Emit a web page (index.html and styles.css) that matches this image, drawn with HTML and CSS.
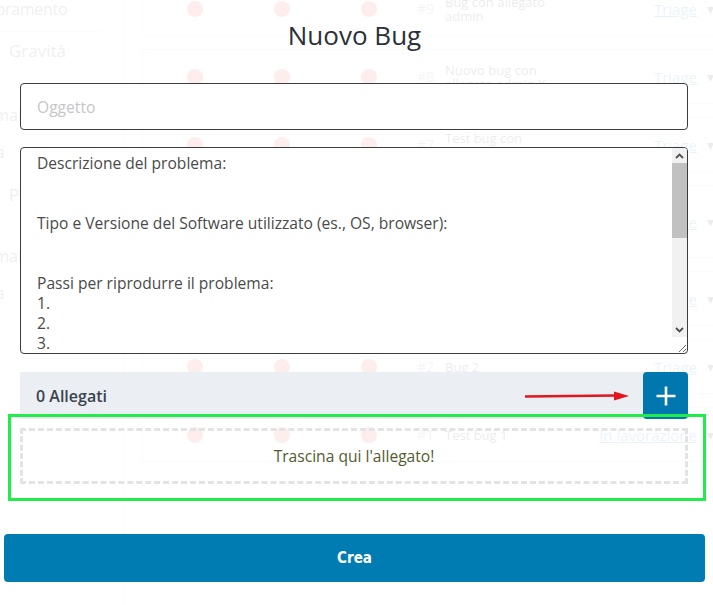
FILE: index.html
```html
<!DOCTYPE html>
<html lang="it">
<head>
<meta charset="utf-8">
<title>Nuovo Bug</title>
<link rel="stylesheet" href="styles.css">
</head>
<body>
<div class="app">
  <aside class="filters">
    <div class="f-opt f-first">Miglioramento</div>
    <div class="f-sep"></div>
    <div class="f-head">Gravità</div>
    <div class="f-opt f-gap">Normal</div>
    <div class="f-opt f-short">Alta</div>
    <div class="f-head f-head2">Priorità</div>
    <div class="f-opt f-gap2">Normal</div>
    <div class="f-opt f-short">Alta</div>
  </aside>
  <section class="list">
    <div class="card">
      <span class="dot"></span><span class="dot"></span><span class="dot"></span>
      <span class="id">#9</span><span class="title">Bug con allegato<br>admin</span>
      <span class="status">Triage</span><span class="chev">&#9662;</span>
    </div>
    <div class="card">
      <span class="dot"></span><span class="dot"></span><span class="dot"></span>
      <span class="id">#8</span><span class="title">Nuovo bug con<br>allegato admin X</span>
      <span class="status">Triage</span><span class="chev">&#9662;</span>
    </div>
    <div class="card">
      <span class="dot"></span><span class="dot"></span><span class="dot"></span>
      <span class="id">#7</span><span class="title">Test bug con<br>allegato</span>
      <span class="status">Triage</span><span class="chev">&#9662;</span>
    </div>
    <div class="card card-tall">
      <span class="dot"></span><span class="dot"></span><span class="dot"></span>
      <span class="id">#5</span><span class="title">Bug con<br>descrizione<br>lunga</span>
      <span class="status">Triage</span><span class="chev">&#9662;</span>
    </div>
    <div class="card">
      <span class="dot"></span><span class="dot"></span><span class="dot"></span>
      <span class="id">#3</span><span class="title">Bug 3</span>
      <span class="status">Triage</span><span class="chev">&#9662;</span>
    </div>
    <div class="card">
      <span class="dot"></span><span class="dot"></span><span class="dot"></span>
      <span class="id">#2</span><span class="title">Bug 2</span>
      <span class="status">Triage</span><span class="chev">&#9662;</span>
    </div>
    <div class="card">
      <span class="dot"></span><span class="dot"></span><span class="dot"></span>
      <span class="id">#1</span><span class="title">Test bug 1</span>
      <span class="status">In lavorazione</span><span class="chev">&#9662;</span>
    </div>
  </section>
</div>

<div class="modal">
  <h1 class="modal-title">Nuovo Bug</h1>
  <form class="fields">
    <input class="subject" type="text" placeholder="Oggetto">
    <div class="desc-wrap">
      <textarea class="desc">Descrizione del problema:


Tipo e Versione del Software utilizzato (es., OS, browser):


Passi per riprodurre il problema:
1.
2.
3.


Risultato atteso:


Risultato ottenuto:


Informazioni aggiuntive:




</textarea>
      <div class="vscroll" aria-hidden="true">
        <span class="sb-btn">
          <svg width="9" height="6" viewBox="0 0 9 6"><path d="M1 5L4.5 1.5L8 5" stroke="#505050" stroke-width="1.8" fill="none"/></svg>
        </span>
        <span class="sb-thumb"></span>
        <span class="sb-track"></span>
        <span class="sb-btn">
          <svg width="9" height="6" viewBox="0 0 9 6"><path d="M1 1L4.5 4.5L8 1" stroke="#505050" stroke-width="1.8" fill="none"/></svg>
        </span>
      </div>
    </div>
    <div class="attach">
      <span class="attach-count">0 Allegati</span>
      <button type="button" class="add-btn" aria-label="Aggiungi allegato">
        <svg width="20" height="20" viewBox="0 0 20 20"><path d="M10 0.5V19.5M0.5 10H19.5" stroke="#fff" stroke-width="2.6" fill="none"/></svg>
      </button>
    </div>
    <div class="dropzone">Trascina qui l'allegato!</div>
  </form>
  <button type="button" class="create">Crea</button>
</div>

<svg class="arrow" width="106" height="14" viewBox="0 0 106 14">
  <path d="M1 7.5L92 6.5" stroke="#e3141b" stroke-width="2.6" fill="none"/>
  <polygon points="90,2.5 105,7 90,11.5" fill="#e3141b"/>
</svg>
<div class="highlight"></div>
</body>
</html>
```

FILE: styles.css
```css
html, body {
  margin: 0;
  padding: 0;
}

body {
  font-family: "Open Sans", "Noto Sans", sans-serif;
  width: 713px;
  height: 605px;
  overflow: hidden;
  background: #fff;
  position: relative;
}

/* ---------- background app ---------- */
.app {
  display: flex;
  height: 605px;
  overflow: hidden;
}

.filters {
  width: 123px;
  flex-shrink: 0;
  border-right: 1px solid #d9d9d9;
  color: #555;
  font-size: 16px;
  overflow: hidden;
}

.f-opt {
  line-height: 18px;
  white-space: nowrap;
}

.f-first {
  margin-left: -38px;
  letter-spacing: -0.3px;
}

.f-sep {
  margin-top: 13px;
  width: 103px;
  border-top: 1px solid #d9d9d9;
}

.f-head {
  margin: 9px 0 0 9px;
  line-height: 20px;
  font-size: 17px;
}

.f-head2 {
  margin-top: 24px;
}

.f-gap {
  margin-top: 45px;
  margin-left: -34px;
}

.f-gap2 {
  margin-top: 42px;
  margin-left: -34px;
}

.f-short {
  margin-top: 19px;
  margin-left: -24px;
}

.list {
  flex: 1;
  padding-left: 18px;
  margin-top: -19px;
  display: flex;
  flex-direction: column;
  gap: 13px;
}

.card {
  flex-shrink: 0;
  height: 55px;
  box-sizing: border-box;
  border: 1px solid #cfcfcf;
  border-right: none;
  border-radius: 4px 0 0 4px;
  padding-left: 44px;
  display: grid;
  grid-template-columns: 87px 87px 56px 28px 1fr auto 16px;
  align-items: center;
}

.card-tall {
  height: 73px;
}

.dot {
  width: 16px;
  height: 16px;
  border-radius: 50%;
  background: #e44a45;
}

.id {
  color: #7d8ea3;
  font-size: 14px;
}

.title {
  color: #333;
  font-size: 13px;
  line-height: 14px;
}

.status {
  color: #2f7fc4;
  text-decoration: underline;
  font-size: 15px;
}

.chev {
  color: #444;
  font-size: 14px;
  padding-left: 10px;
}

/* ---------- modal ---------- */
.modal {
  position: absolute;
  inset: 0;
  background: rgba(255, 255, 255, 0.9);
  padding: 0 8px 0 4px;
  display: flex;
  flex-direction: column;
}

.modal-title {
  margin: 19px 0 32px;
  font-size: 26px;
  font-weight: 400;
  line-height: 32px;
  text-align: center;
  color: #2b303a;
}

.fields {
  margin: 0 17px 0 16px;
  display: flex;
  flex-direction: column;
}

.subject {
  height: 47px;
  box-sizing: border-box;
  border: 1px solid #3c3c3c;
  border-radius: 4px;
  padding: 0 16px;
  font-family: "Open Sans", "Noto Sans", sans-serif;
  font-size: 15.6px;
  color: #4a4a4a;
  background: #fff;
  outline: none;
}

.subject::placeholder {
  color: #c6c6c6;
}

.desc-wrap {
  position: relative;
  margin-top: 17px;
  display: flex;
  flex-direction: column;
}

.desc {
  height: 207px;
  box-sizing: border-box;
  border: 1px solid #3c3c3c;
  border-radius: 4px;
  padding: 5px 31px 5px 16px;
  font-family: "Open Sans", "Noto Sans", sans-serif;
  font-size: 15.6px;
  line-height: 20px;
  color: #4a4a4a;
  background: #fff;
  outline: none;
  resize: vertical;
  overflow: hidden;
}

.vscroll {
  position: absolute;
  top: 1px;
  right: 1px;
  width: 15px;
  height: 189px;
  background: #f1f1f1;
  display: flex;
  flex-direction: column;
  border-top-right-radius: 3px;
}

.sb-btn {
  height: 15px;
  flex-shrink: 0;
  display: flex;
  align-items: center;
  justify-content: center;
}

.sb-thumb {
  height: 75px;
  flex-shrink: 0;
  background: #c1c1c1;
}

.sb-track {
  flex: 1;
}

.attach {
  margin-top: 18px;
  height: 47px;
  background: #ebeef3;
  display: flex;
  align-items: center;
  justify-content: space-between;
  padding-left: 16px;
}

.attach-count {
  font-size: 16px;
  font-weight: 600;
  color: #3a4350;
}

.add-btn {
  width: 45px;
  height: 47px;
  border: 0;
  border-radius: 4px;
  background: #0077ae;
  padding: 0;
  display: flex;
  align-items: center;
  justify-content: center;
}

.dropzone {
  margin-top: 9px;
  height: 56px;
  box-sizing: border-box;
  border: 3px dashed #e3e3e3;
  display: flex;
  align-items: center;
  justify-content: center;
  color: #545a2e;
  font-size: 15.6px;
}

.create {
  margin-top: 50px;
  height: 48px;
  border: 0;
  border-radius: 4px;
  background: #007cb3;
  color: #fff;
  font-family: "DejaVu Sans Condensed", "DejaVu Sans", sans-serif;
  font-stretch: condensed;
  font-weight: bold;
  font-size: 15px;
}

/* ---------- annotations ---------- */
.arrow {
  position: absolute;
  left: 524px;
  top: 389px;
}

.highlight {
  position: absolute;
  left: 8px;
  top: 414px;
  width: 698px;
  height: 87px;
  box-sizing: border-box;
  border: 3px solid #22ec4a;
}
```
